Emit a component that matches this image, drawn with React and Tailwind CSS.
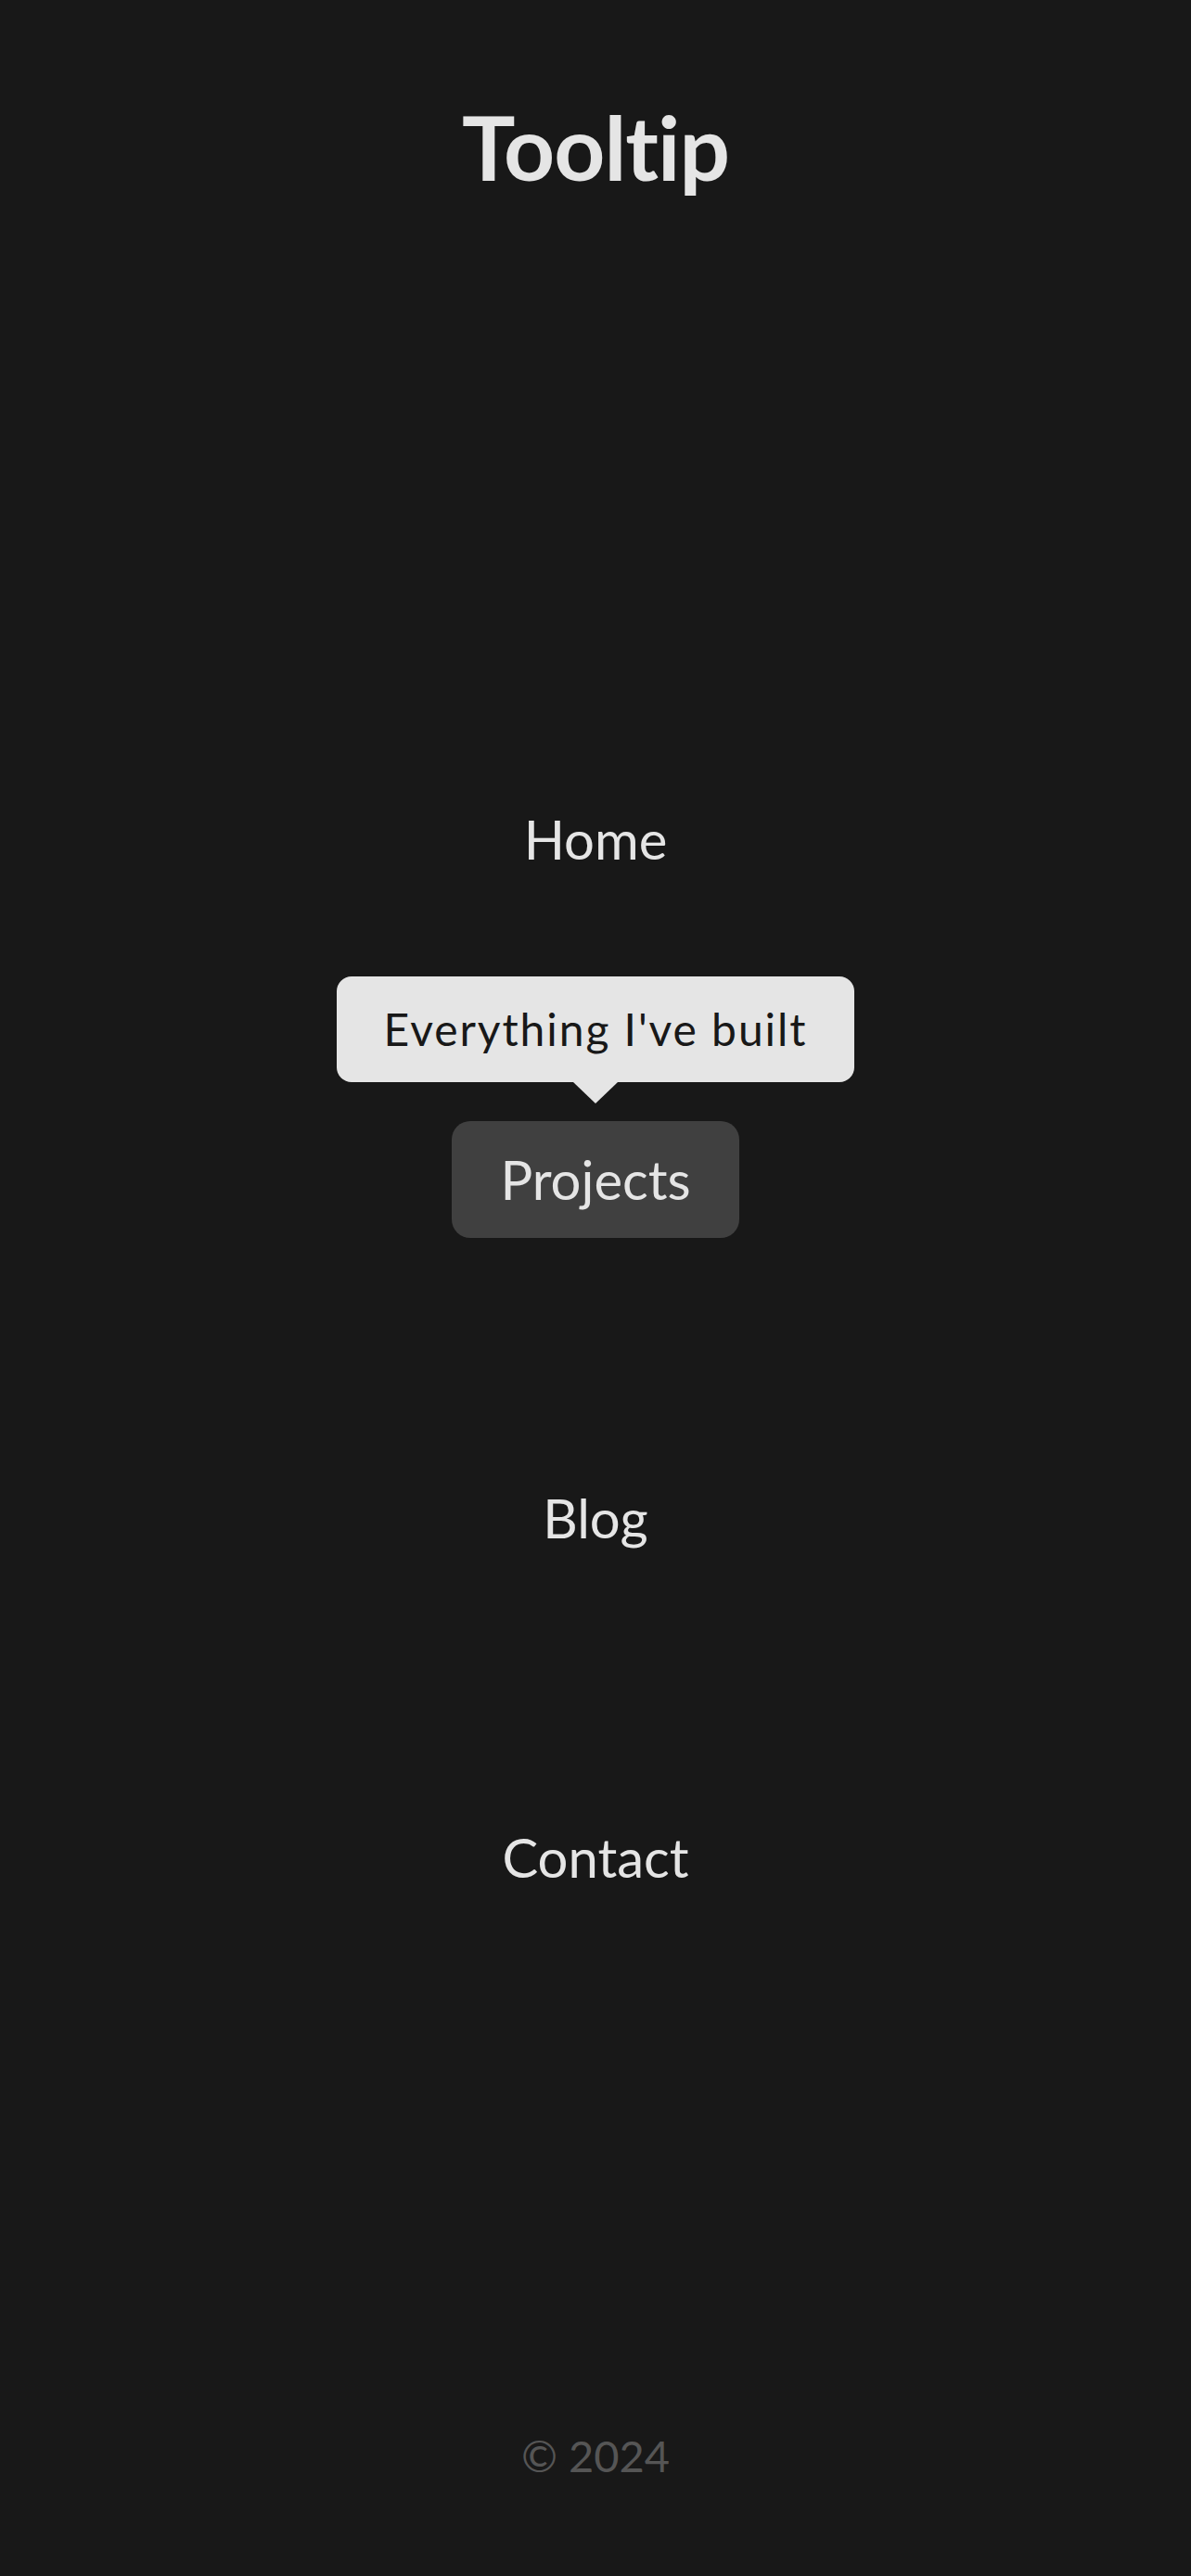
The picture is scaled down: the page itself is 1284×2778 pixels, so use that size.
export default function App() {
  const font = { fontFamily: 'Lato, "Noto Sans", sans-serif' };
  return (
    <div className="min-h-[2778px] bg-[#181818] flex flex-col items-center [font-variant-ligatures:none]" style={font}>
      <h1 className="mt-[110px] text-[96px] leading-none font-bold text-[#e5e5e5] tracking-[-0.01em]">Tooltip</h1>
      <nav className="flex flex-col items-center">
        <a className="mt-[670px] text-[58px] leading-none text-[#e5e5e5]">Home</a>
        <div className="relative mt-[275px]">
          <div className="absolute bottom-[calc(100%+42px)] left-1/2 -translate-x-1/2 w-[558px] h-[114px] rounded-[16px] bg-[#e5e5e5] flex items-center justify-center">
            <span className="text-[48px] leading-none text-[#181818] tracking-[0.04em] whitespace-nowrap">Everything I've built</span>
            <div className="absolute top-full left-1/2 -translate-x-1/2 w-0 h-0 border-x-[24px] border-x-transparent border-t-[23px] border-t-[#e5e5e5]" />
          </div>
          <button className="w-[310px] h-[126px] rounded-[20px] bg-[#404040] flex items-center justify-center text-[58px] leading-none text-[#e5e5e5]">
            Projects
          </button>
        </div>
        <a className="mt-[273px] text-[58px] leading-none text-[#e5e5e5]">Blog</a>
        <a className="mt-[308px] text-[58px] leading-none text-[#e5e5e5]">Contact</a>
      </nav>
      <footer className="mt-[593px] text-[47px] leading-none text-[#555555]">© 2024</footer>
    </div>
  );
}
